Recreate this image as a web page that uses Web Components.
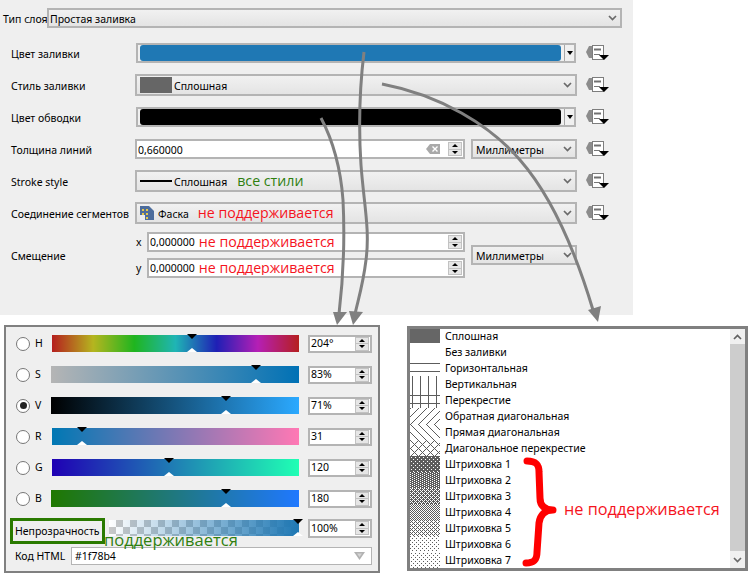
<!DOCTYPE html>
<html lang="ru">
<head>
<meta charset="utf-8">
<title>Symbol layer</title>
<style>
  html, body { margin: 0; padding: 0; background: #fff; }
  body { font: 10.5px "Noto Sans", "Liberation Sans", sans-serif; color: #000; overflow: hidden; }
</style>
</head>
<body>
<layer-sheet>
  <style-panel>
    <layer-type-row></layer-type-row>
    <form-row label="Цвет заливки"><q-color-button color="#1f78b4"></q-color-button></form-row>
    <form-row label="Стиль заливки"><q-select text="Сплошная" icon="fill"></q-select></form-row>
    <form-row label="Цвет обводки"><q-color-button color="#000"></q-color-button></form-row>
    <form-row label="Толщина линий">
      <q-spin value="0,660000" clear style="width:330px;--spin-pad:2px 0 0"></q-spin>
      <q-select text="Миллиметры" style="flex:none;width:106px;height:20px;margin-left:6px"></q-select>
    </form-row>
    <form-row label="Stroke style">
      <q-select text="Сплошная" icon="line"><note-text tone="green" style="margin-left:10px">все стили</note-text></q-select>
    </form-row>
    <form-row label="Соединение сегментов">
      <q-select text="Фаска" icon="bevel"><note-text style="margin-left:9px">не поддерживается</note-text></q-select>
    </form-row>
    <form-row label="Смещение" nodd tall>
      <offset-group>
        <note-text slot="x" style="margin-left:4px">не поддерживается</note-text>
        <note-text slot="y" style="margin-left:4px">не поддерживается</note-text>
      </offset-group>
    </form-row>
  </style-panel>
  <lower-row>
    <color-panel>
      <color-row label="H" value="204°" pos="140" gradient="#b51f1f,#b5b51f,#1fb51f,#1fb5b5,#1f1fb5,#b51fb5,#b51f1f"></color-row>
      <color-row label="S" value="83%" pos="205" wide gradient="#b5b5b5,#0071b5"></color-row>
      <color-row label="V" value="71%" pos="175" wide checked gradient="#000,#2ba9ff"></color-row>
      <color-row label="R" value="31" pos="30" gradient="#0078b4,#ff78b4"></color-row>
      <color-row label="G" value="120" pos="117" gradient="#1f00b4,#1fffb4"></color-row>
      <color-row label="B" value="180" pos="175" wide gradient="#1f7800,#1f78ff"></color-row>
      <opacity-row></opacity-row>
      <html-row></html-row>
    </color-panel>
    <hatch-list>
      <hatch-item text="Сплошная" kind="solid" first></hatch-item>
      <hatch-item text="Без заливки" kind="none"></hatch-item>
      <hatch-item text="Горизонтальная" kind="hor"></hatch-item>
      <hatch-item text="Вертикальная" kind="ver"></hatch-item>
      <hatch-item text="Перекрестие" kind="cross"></hatch-item>
      <hatch-item text="Обратная диагональная" kind="bdiag"></hatch-item>
      <hatch-item text="Прямая диагональная" kind="fdiag"></hatch-item>
      <hatch-item text="Диагональное перекрестие" kind="dcross"></hatch-item>
      <hatch-item text="Штриховка 1" kind="d1"></hatch-item>
      <hatch-item text="Штриховка 2" kind="d2"></hatch-item>
      <hatch-item text="Штриховка 3" kind="d3"></hatch-item>
      <hatch-item text="Штриховка 4" kind="d4"></hatch-item>
      <hatch-item text="Штриховка 5" kind="d5"></hatch-item>
      <hatch-item text="Штриховка 6" kind="d6"></hatch-item>
      <hatch-item text="Штриховка 7" kind="d7"></hatch-item>
    </hatch-list>
  </lower-row>
  <arrow-overlay></arrow-overlay>
</layer-sheet>

<script>
const FIELD_BORDER = '#b4b4b4';

// small helper, every element just sets its shadow html
class ShadowElement extends HTMLElement {
  constructor() {
    super();
    this.attachShadow({ mode: 'open' });
  }
  connectedCallback() {
    this.shadowRoot.innerHTML = this.render();
  }
}

const CHEVRON = `<svg width="9" height="6" viewBox="0 0 9 6"><path d="M1 1l3.5 3.5L8 1" fill="none" stroke="#6a6a6a" stroke-width="1.7"/></svg>`;

class LayerSheet extends ShadowElement {
  render() {
    return `<style>
      :host { display: block; position: relative; width: 753px; height: 580px; overflow: hidden; }
    </style><slot></slot>`;
  }
}

class StylePanel extends ShadowElement {
  render() {
    return `<style>
      :host { display: block; width: 633px; height: 315px; box-sizing: border-box; padding-top: 8px; background: #efefef; }
    </style><slot></slot>`;
  }
}

class LayerTypeRow extends ShadowElement {
  render() {
    return `<style>
      :host { display: flex; align-items: center; height: 20px; margin-bottom: 9px; padding-left: 3px; }
      span { width: 44px; padding-top: 2px; white-space: nowrap; }
      q-select { flex: none; width: 575px; height: 20px; }
    </style><span>Тип слоя</span><q-select text="Простая заливка" tight></q-select>`;
  }
}

class FormRow extends ShadowElement {
  render() {
    const tall = this.hasAttribute('tall');
    const dd = this.hasAttribute('nodd') ? '' : '<q-dd></q-dd>';
    return `<style>
      :host { display: flex; align-items: center; height: ${tall ? 52 : 32}px; }
      .label { width: 124px; margin-left: 11px; padding-top: 2px; white-space: nowrap; }
      .field { display: flex; align-items: center; width: 442px; margin-right: 9px; }
    </style><span class="label">${this.getAttribute('label')}</span><div class="field"><slot></slot></div>${dd}`;
  }
}

class QSelect extends ShadowElement {
  render() {
    const kind = this.getAttribute('icon');
    const tight = this.hasAttribute('tight');
    let icon = '';
    if (kind === 'fill') icon = '<i class="swatch"></i>';
    if (kind === 'line') icon = '<i class="stroke"></i>';
    if (kind === 'bevel') icon = `<svg class="bevel" width="14" height="14" viewBox="0 0 14 14">
      <path d="M0 0H9L14 5V14H0Z" fill="#4d6d9c"/><path d="M0 9H5V14H0Z" fill="#e9ecf2"/>
      <path d="M2 3h2v2H2zM6 3h2v2H6zM2 7h2v2H2zM6 7h2v2H6zM6 11h2v2H6z" fill="#e6c84a"/></svg>`;
    return `<style>
      :host { display: flex; align-items: center; flex: 1; box-sizing: border-box; height: 22px;
        border: 2px solid ${FIELD_BORDER}; background: linear-gradient(#f1f1f1, #e4e4e4); white-space: nowrap; }
      .body { flex: 1; display: flex; align-items: center; padding-left: ${tight ? 1 : 3}px; min-width: 0; }
      .body span { padding-top: 2px; }
      .swatch { width: 32px; height: 16px; margin-right: 2px; background: #666; }
      .stroke { width: 32px; height: 2px; margin-right: 2px; background: #000; }
      .bevel { margin-right: 4px; }
      .arrow { display: flex; margin-right: 3px; }
    </style><div class="body">${icon}<span>${this.getAttribute('text')}</span><slot></slot></div><div class="arrow">${CHEVRON}</div>`;
  }
}

class QColorButton extends ShadowElement {
  render() {
    return `<style>
      :host { display: flex; align-items: center; box-sizing: border-box; flex: 1; height: 20px; margin: 0 1px;
        border: 2px solid ${FIELD_BORDER}; background: #f0f0f0; padding-left: 2px; }
      .color { flex: 1; height: 16px; border-radius: 3px; background: ${this.getAttribute('color')}; }
      .sep { width: 1px; height: 16px; margin-left: 3px; background: #a8a8a8; }
      .drop { width: 0; height: 0; margin: 0 1px 0 2px; border: 3.5px solid transparent; border-top: 4px solid #000; border-bottom: 0; }
    </style><div class="color"></div><div class="sep"></div><div class="drop"></div>`;
  }
}

class QSpin extends ShadowElement {
  render() {
    const clear = this.hasAttribute('clear') ? `<svg class="clear" width="14" height="10" viewBox="0 0 14 10">
      <path d="M0 5L4 0H14V10H4Z" fill="#a9a9a9"/><path d="M6.5 2.5l5 5M11.5 2.5l-5 5" stroke="#fff" stroke-width="1.4"/></svg>` : '';
    return `<style>
      :host { display: flex; align-items: center; box-sizing: border-box; height: 20px; border: 2px solid ${FIELD_BORDER};
        background: #fff; padding-left: 1px; white-space: nowrap; }
      .text { flex: 1; display: flex; align-items: center; min-width: 0; overflow: hidden; }
      .text span { padding: var(--spin-pad, 0); }
      .clear { margin-right: 8px; }
      .btns { display: flex; flex-direction: column; width: 14px; height: 14px; margin-right: 1px; background: #e6e6e6; border: 1px solid #c2c2c2; box-sizing: border-box; }
      .btns b { flex: 1; display: flex; align-items: center; justify-content: center; }
      .btns b + b { border-top: 1px solid #c2c2c2; }
      .up, .down { width: 0; height: 0; border: 3px solid transparent; }
      .up { border-bottom: 3px solid #000; border-top: 0; }
      .down { border-top: 3px solid #000; border-bottom: 0; }
    </style><div class="text"><span>${this.getAttribute('value')}</span><slot></slot></div>${clear}
    <div class="btns"><b><i class="up"></i></b><b><i class="down"></i></b></div>`;
  }
}

class QDd extends ShadowElement {
  render() {
    return `<style>
      :host { display: block; width: 23px; height: 18px; }
      svg { display: block; }
    </style><svg width="23" height="18" viewBox="0 0 23 18">
      <path d="M7 2H3L0 8L3 14H7Z" fill="#8c8c8c"/>
      <rect x="6.500" y="1.500" width="11" height="14" fill="#fff" stroke="#7d7d7d"/>
      <path d="M8 5.500H15" stroke="#707070" stroke-width="2"/><path d="M8 10.500H14" stroke="#777"/>
      <path d="M13 11H23L18 16Z" fill="#000"/>
    </svg>`;
  }
}

class NoteText extends ShadowElement {
  render() {
    const green = this.getAttribute('tone') === 'green';
    return `<style>
      :host { display: inline-block; font: 14.200px/1 "Open Sans", "Liberation Sans", sans-serif;
        color: ${green ? '#2f7f10' : '#f5141e'}; white-space: nowrap; }
    </style><slot></slot>`;
  }
}

class OffsetGroup extends ShadowElement {
  render() {
    return `<style>
      :host { display: flex; align-items: center; flex: 1; height: 52px; }
      .axes { display: grid; grid-template-columns: 12px 318px; grid-auto-rows: 20px; row-gap: 6px; align-items: center; }
      q-select { width: 106px; height: 20px; flex: none; margin: 0 0 0 6px; }
      span { padding-left: 1px; }
    </style><div class="axes">
      <span>x</span><q-spin value="0,000000"><slot name="x"></slot></q-spin>
      <span>y</span><q-spin value="0,000000"><slot name="y"></slot></q-spin>
    </div><q-select text="Миллиметры"></q-select>`;
  }
}

class LowerRow extends ShadowElement {
  render() {
    return `<style>
      :host { display: flex; align-items: flex-start; gap: 27px; padding: 10px 0 0 4px; }
    </style><slot></slot>`;
  }
}

class ColorPanel extends ShadowElement {
  render() {
    return `<style>
      :host { display: block; box-sizing: border-box; width: 376px; height: 248px; padding-top: 1px; border: 2px solid #808080; background: #efefef; }
    </style><slot></slot>`;
  }
}

class ColorRow extends ShadowElement {
  render() {
    const wide = this.hasAttribute('wide');
    const checked = this.hasAttribute('checked');
    return `<style>
      :host { display: flex; align-items: center; height: 31px; }
      .radio { box-sizing: border-box; width: 14px; height: 14px; margin-left: 10px; border: 1px solid #777; border-radius: 50%; background: #fff;
        display: flex; align-items: center; justify-content: center; }
      .radio i { width: 7px; height: 7px; border-radius: 50%; background: #222; }
      .label { width: ${wide ? 16 : 17}px; margin-left: 5px; padding-bottom: 2px; }
      gradient-slider { width: ${wide ? 248 : 247}px; height: 17px; }
      q-spin { width: 64px; height: 18px; margin-left: 9px; --spin-pad: 0 0 2px; }
    </style><div class="radio">${checked ? '<i></i>' : ''}</div><span class="label">${this.getAttribute('label')}</span>
    <gradient-slider gradient="${this.getAttribute('gradient')}" pos="${this.getAttribute('pos')}"></gradient-slider>
    <q-spin value="${this.getAttribute('value')}"></q-spin>`;
  }
}

class GradientSlider extends ShadowElement {
  render() {
    const checker = this.hasAttribute('checker')
      ? ', repeating-conic-gradient(#c8c8c8 0 25%, #fff 0 50%) 0 0 / 14px 14px' : '';
    const start = this.hasAttribute('checker') ? 'rgba(31,120,180,0),' : '';
    return `<style>
      :host { display: block; position: relative; background: linear-gradient(90deg, ${start}${this.getAttribute('gradient')})${checker}; }
      i { position: absolute; left: ${this.getAttribute('pos')}px; width: 0; height: 0; margin-left: -5px; border: 5px solid transparent; }
      .top { top: -1px; border-top: 5px solid #000; border-bottom: 0; }
      .bottom { bottom: 0; border-bottom: 4px solid #fff; border-top: 0; }
    </style><i class="top"></i><i class="bottom"></i>`;
  }
}

class OpacityRow extends ShadowElement {
  render() {
    return `<style>
      :host { display: flex; align-items: center; position: relative; height: 31px; }
      .box { box-sizing: border-box; width: 95px; height: 26px; margin: 3px 0 0 4px; padding-left: 2px; border: 3px solid #2a7a00;
        display: flex; align-items: center; white-space: nowrap; }
      gradient-slider { width: 190px; height: 16px; margin: 0 0 3px 4px; }
      q-spin { width: 64px; height: 19px; margin: 0 0 3px 9px; }
      /* label lies over the row below, same as in the screenshot */
      note-text { position: absolute; left: 98px; top: 18px; font-size: 16.500px; }
    </style><div class="box">Непрозрачность</div>
    <gradient-slider checker gradient="#1f78b4" pos="189"></gradient-slider>
    <q-spin value="100%"></q-spin>
    <note-text tone="green">поддерживается</note-text>`;
  }
}

class HtmlRow extends ShadowElement {
  render() {
    return `<style>
      :host { display: flex; align-items: center; height: 22px; padding-left: 9px; }
      span { width: 56px; white-space: nowrap; }
      .input { display: flex; align-items: center; justify-content: space-between; box-sizing: border-box; width: 301px; height: 18px;
        padding: 0 6px 0 3px; border: 1px solid ${FIELD_BORDER}; background: #fff; }
      svg { display: block; }
    </style><span>Код HTML</span><div class="input"><b style="font-weight:400">#1f78b4</b>
    <svg width="11" height="8" viewBox="0 0 11 8"><path d="M0 0H11L5.500 8Z" fill="#b2b2b2"/><path d="M3 1.500H8L5.500 5Z" fill="#d4d4d4"/></svg></div>`;
  }
}

class HatchList extends ShadowElement {
  render() {
    return `<style>
      :host { display: block; position: relative; box-sizing: border-box; width: 341px; height: 245px; margin-top: 1px; border: 3px solid #808080; background: #fff; }
      .rows { height: 100%; overflow: hidden; }
      .bar { position: absolute; top: 0; right: 0; bottom: 0; width: 15px; display: flex; flex-direction: column; background: #cdcdcd; }
      .btn { height: 15px; display: flex; align-items: center; justify-content: center; background: #f0f0f0; }
      .btn + .btn { margin-top: auto; height: 17px; }
      svg { display: block; }
      note-text { position: absolute; left: 154px; top: 172px; font-size: 16.300px; }
    </style><div class="rows"><slot></slot></div>
    <div class="bar">
      <div class="btn"><svg width="9" height="6" viewBox="0 0 9 6"><path d="M1 5l3.500-3.500L8 5" fill="none" stroke="#606060" stroke-width="1.700"/></svg></div>
      <div class="btn">${CHEVRON}</div>
    </div>
    <note-text>не поддерживается</note-text>`;
  }
}

// Qt brush tiles: 8 rows of bits, a set bit stays white
const DENSE = {
  d1: [0x00, 0x44, 0x00, 0x11],
  d2: [0x88, 0x22],
  d3: [0xaa, 0x44, 0xaa, 0x11],
  d4: [0x55, 0xaa],
  d5: [0x55, 0xbb, 0x55, 0xee],
  d6: [0x77, 0xff, 0xdd, 0xff],
  d7: [0xff, 0xbb, 0xff, 0xee],
};
const LINES = {
  hor: (x, y) => y === 3,
  ver: (x, y) => x === 2,
  cross: (x, y) => y === 3 || x === 2,
  bdiag: (x, y) => (x + y) % 8 === 0,
  fdiag: (x, y) => (x - y + 8) % 8 === 0,
  dcross: (x, y) => (x + y) % 8 === 0 || (x - y + 8) % 8 === 0,
};

function hatchTile(kind) {
  let out = '';
  for (let y = 0; y < 8; y++) {
    for (let x = 0; x < 8; x++) {
      let dark;
      if (DENSE[kind]) {
        const bits = DENSE[kind];
        dark = !(bits[y % bits.length] & (0x80 >> x));
      } else {
        dark = LINES[kind](x, y);
      }
      if (dark) out += `<rect x="${x}" y="${y}" width="1" height="1"/>`;
    }
  }
  return out;
}

class HatchItem extends ShadowElement {
  render() {
    const kind = this.getAttribute('kind');
    const first = this.hasAttribute('first');
    let swatch = '';
    if (kind === 'solid') swatch = '<rect width="30" height="14" fill="#666"/>';
    else if (kind !== 'none') {
      swatch = `<defs><pattern id="p" width="8" height="8" patternUnits="userSpaceOnUse"><g fill="#5c5c5c">${hatchTile(kind)}</g></pattern></defs>
        <rect width="30" height="16" fill="url(#p)"/>`;
    }
    return `<style>
      :host { display: flex; align-items: center; height: ${first ? 15 : 16}px; white-space: nowrap; }
      svg { display: block; flex: none; margin-right: 5px; }
      span { margin-bottom: 1px; }
    </style><svg width="30" height="${first ? 15 : 16}" shape-rendering="crispEdges">${swatch}</svg><span>${this.getAttribute('text')}</span>`;
  }
}

class ArrowOverlay extends ShadowElement {
  render() {
    return `<style>
      :host { position: absolute; left: 0; top: 0; width: 753px; height: 580px; pointer-events: none; }
      svg { display: block; }
      .arrow { fill: none; stroke: #808080; stroke-width: 3; }
      .head { fill: #808080; }
      .brace { fill: none; stroke: #ff0000; stroke-width: 7; stroke-linecap: round; stroke-linejoin: round; }
    </style><svg width="753" height="580" viewBox="0 0 753 580">
      <path class="arrow" d="M321 118C330 135 340 160 343 200C345 240 343 280 339 314"/>
      <path class="head" d="M333 312H347L337 325Z"/>
      <path class="arrow" d="M364 52C360 85 358 120 361 165C364 205 370 230 366 260C363 285 358 300 355 314"/>
      <path class="head" d="M349 311L363 312L353 325Z"/>
      <path class="arrow" d="M382 84C440 95 490 125 520 160C555 200 578 260 593 310"/>
      <path class="head" d="M588 310L601 306L598 322Z"/>
      <path class="brace" d="M527 461C536 461 539 464 539 472L540 498C540 506 545 510 553 510C545 510 540 515 539 523L537 552C537 560 534 563 526 563"/>
    </svg>`;
  }
}

customElements.define('layer-sheet', LayerSheet);
customElements.define('style-panel', StylePanel);
customElements.define('layer-type-row', LayerTypeRow);
customElements.define('form-row', FormRow);
customElements.define('q-select', QSelect);
customElements.define('q-color-button', QColorButton);
customElements.define('q-spin', QSpin);
customElements.define('q-dd', QDd);
customElements.define('note-text', NoteText);
customElements.define('offset-group', OffsetGroup);
customElements.define('lower-row', LowerRow);
customElements.define('color-panel', ColorPanel);
customElements.define('color-row', ColorRow);
customElements.define('gradient-slider', GradientSlider);
customElements.define('opacity-row', OpacityRow);
customElements.define('html-row', HtmlRow);
customElements.define('hatch-list', HatchList);
customElements.define('hatch-item', HatchItem);
customElements.define('arrow-overlay', ArrowOverlay);
</script>
</body>
</html>
